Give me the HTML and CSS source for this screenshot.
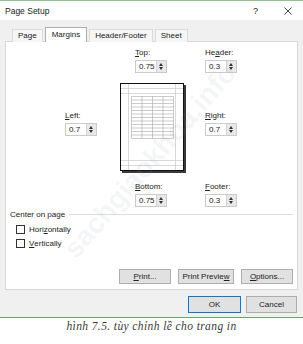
FILE: index.html
```html
<!DOCTYPE html>
<html lang="en">
<head>
    <meta charset="UTF-8">
    <meta name="viewport" content="width=device-width, initial-scale=1.0">
    <title>Page Setup</title>
    <link rel="stylesheet" href="styles.css">
</head>
<body>
    <div class="dialog">
        <div class="titlebar">
            <span class="title">Page Setup</span>
            <span class="title-actions">
                <span class="help">?</span>
                <svg class="close" width="8" height="8" viewBox="0 0 8 8"><path d="M0.5 0.5L7.5 7.5M7.5 0.5L0.5 7.5" stroke="#333" stroke-width="0.9"/></svg>
            </span>
        </div>

        <div class="dialog-body">
            <div class="tab-buttons">
                <div class="tab-btn">Page</div>
                <div class="tab-btn active">Margins</div>
                <div class="tab-btn">Header/Footer</div>
                <div class="tab-btn">Sheet</div>
            </div>

            <div class="panel">
                <div class="margin-grid">
                    <div class="field field-top">
                        <div class="field-label"><u>T</u>op:</div>
                        <div class="spin"><span class="spin-value">0.75</span><span class="spin-arrows"></span></div>
                    </div>
                    <div class="field field-header">
                        <div class="field-label">He<u>a</u>der:</div>
                        <div class="spin"><span class="spin-value">0.3</span><span class="spin-arrows"></span></div>
                    </div>
                    <div class="field field-left">
                        <div class="field-label"><u>L</u>eft:</div>
                        <div class="spin"><span class="spin-value">0.7</span><span class="spin-arrows"></span></div>
                    </div>
                    <svg class="preview" width="66" height="90" viewBox="0 0 66 90">
                        <rect x="2" y="2" width="64" height="88" fill="#3a3a3a"/>
                        <rect x="0.5" y="0.5" width="63" height="87" fill="#fff" stroke="#111"/>
                        <path d="M8.5 1V87M55.5 1V87M1 5.5H63M1 10.5H63M1 77.5H63M1 82.5H63" stroke="#cfcfcf" stroke-width="0.8" fill="none"/>
                        <path d="M11.5 13.5H53.5V55.5H11.5ZM22 13.5V55.5M32.5 13.5V55.5M43 13.5V55.5M11.5 17H53.5M11.5 20.5H53.5M11.5 24H53.5M11.5 27.5H53.5M11.5 31H53.5M11.5 34.5H53.5M11.5 38H53.5M11.5 41.5H53.5M11.5 45H53.5M11.5 48.5H53.5M11.5 52H53.5" stroke="#a8a8a8" stroke-width="0.6" fill="none"/>
                    </svg>
                    <div class="field field-right">
                        <div class="field-label"><u>R</u>ight:</div>
                        <div class="spin"><span class="spin-value">0.7</span><span class="spin-arrows"></span></div>
                    </div>
                    <div class="field field-bottom">
                        <div class="field-label"><u>B</u>ottom:</div>
                        <div class="spin"><span class="spin-value">0.75</span><span class="spin-arrows"></span></div>
                    </div>
                    <div class="field field-footer">
                        <div class="field-label"><u>F</u>ooter:</div>
                        <div class="spin"><span class="spin-value">0.3</span><span class="spin-arrows"></span></div>
                    </div>
                </div>

                <div class="group-title"><span>Center on page</span></div>
                <label class="check"><span class="check-box"></span>Hori<u>z</u>ontally</label>
                <label class="check"><span class="check-box"></span><u>V</u>ertically</label>

                <div class="panel-buttons">
                    <button type="button" class="btn btn-print"><u>P</u>rint...</button>
                    <button type="button" class="btn btn-preview">Print Previe<u>w</u></button>
                    <button type="button" class="btn btn-options"><u>O</u>ptions...</button>
                </div>
            </div>

            <div class="dialog-buttons">
                <button type="button" class="btn btn-ok">OK</button>
                <button type="button" class="btn btn-cancel">Cancel</button>
            </div>
        </div>

        <div class="watermark">sachgiaokhoa.info</div>
    </div>

    <p class="caption">hình 7.5. tùy chỉnh lề cho trang in</p>
</body>
</html>
```

FILE: styles.css
```css
body {
    margin: 0;
    width: 303px;
    background: #fff;
    font-family: "Liberation Sans", Arial, sans-serif;
    font-size: 8px;
    color: #222;
}
u {
    text-decoration-thickness: 1px;
    text-underline-offset: 1px;
}
.dialog {
    position: relative;
    overflow: hidden;
    background: #f0f0f0;
    border-top: 1px solid #8cc48c;
    border-bottom: 1px solid #62ab62;
}
.titlebar {
    height: 19px;
    background: #fff;
    display: flex;
    align-items: center;
    justify-content: space-between;
    padding: 0 11px 0 5px;
    font-size: 8.5px;
}
.title-actions {
    display: flex;
    align-items: center;
    gap: 26px;
}
.help {
    font-size: 9px;
}
.dialog-body {
    padding: 7px 5px 4px 5px;
}
.tab-buttons {
    display: flex;
    align-items: flex-end;
    gap: 2px;
    margin-left: 7px;
    position: relative;
    z-index: 1;
}
.tab-btn {
    height: 12px;
    line-height: 12px;
    padding: 0 5px;
    background: #f6f6f6;
    border: 1px solid #dcdcdc;
    border-bottom: none;
}
.tab-btn.active {
    height: 14px;
    line-height: 13px;
    padding: 0 6px;
    background: #fff;
    border-color: #adadad;
}
.panel {
    background: #fff;
    border: 1px solid #d9d9d9;
    margin-top: -1px;
    padding: 6px 4px 5px 4px;
}
.margin-grid {
    display: grid;
    grid-template-columns: 55px 55px 85px auto;
}
.field-label {
    height: 10px;
    line-height: 10px;
}
.spin {
    display: flex;
    width: 32px;
    height: 13px;
    margin-top: 2px;
    box-sizing: border-box;
    border: 1px solid #cbcbcb;
    background: #fff;
}
.spin-value {
    flex: 1;
    padding-left: 3px;
    line-height: 11px;
}
.spin-arrows {
    width: 9px;
    background: #e8e8e8;
    border-left: 1px solid #d4d4d4;
    position: relative;
}
.spin-arrows::before,
.spin-arrows::after {
    content: "";
    position: absolute;
    left: 2px;
    border-left: 2.5px solid transparent;
    border-right: 2.5px solid transparent;
}
.spin-arrows::before {
    top: 2px;
    border-bottom: 3px solid #333;
}
.spin-arrows::after {
    bottom: 2px;
    border-top: 3px solid #333;
}
.field-top {
    grid-column: 3;
    grid-row: 1;
    margin-left: 15px;
}
.field-header {
    grid-column: 4;
    grid-row: 1;
}
.field-left {
    grid-column: 2;
    grid-row: 2;
    align-self: center;
}
.preview {
    grid-column: 3;
    grid-row: 2;
    margin-top: 10px;
    display: block;
}
.field-right {
    grid-column: 4;
    grid-row: 2;
    align-self: center;
}
.field-bottom {
    grid-column: 3;
    grid-row: 3;
    margin: 9px 0 0 15px;
}
.field-footer {
    grid-column: 4;
    grid-row: 3;
    margin-top: 9px;
}
.group-title {
    display: flex;
    align-items: center;
    gap: 4px;
    margin-top: 2px;
    height: 10px;
}
.group-title::after {
    content: "";
    flex: 1;
    border-top: 1px solid #dcdcdc;
}
.check {
    display: flex;
    align-items: center;
    height: 14px;
    padding-left: 6px;
}
.check:first-of-type {
    margin-top: 3px;
}
.check-box {
    width: 9px;
    height: 9px;
    box-sizing: border-box;
    border: 1px solid #333;
    margin-right: 4px;
}
.panel-buttons {
    display: flex;
    justify-content: flex-end;
    gap: 7px;
    margin-top: 19px;
}
.btn {
    font-family: inherit;
    font-size: 8px;
    color: #222;
    height: 15px;
    padding: 0;
    background: #e1e1e1;
    border: 1px solid #adadad;
}
.btn-print,
.btn-options {
    width: 52px;
}
.btn-preview {
    width: 56px;
}
.dialog-buttons {
    display: flex;
    justify-content: flex-end;
    gap: 5px;
    margin-top: 6px;
    padding-right: 1px;
}
.btn-ok,
.btn-cancel {
    height: 17px;
    width: 51px;
}
.btn-ok {
    width: 53px;
    border-color: #0078d7;
}
.watermark {
    position: absolute;
    left: 150px;
    top: 160px;
    transform: translate(-50%, -50%) rotate(-49deg);
    font-size: 28px;
    font-weight: bold;
    white-space: nowrap;
    color: rgba(140, 150, 160, 0.1);
    pointer-events: none;
}
.caption {
    margin: 1px 0 0;
    line-height: 14px;
    text-align: center;
    font-family: "Liberation Serif", "Times New Roman", serif;
    font-style: italic;
    font-size: 11.5px;
    letter-spacing: 0.4px;
    color: #3a3a3a;
}
```
